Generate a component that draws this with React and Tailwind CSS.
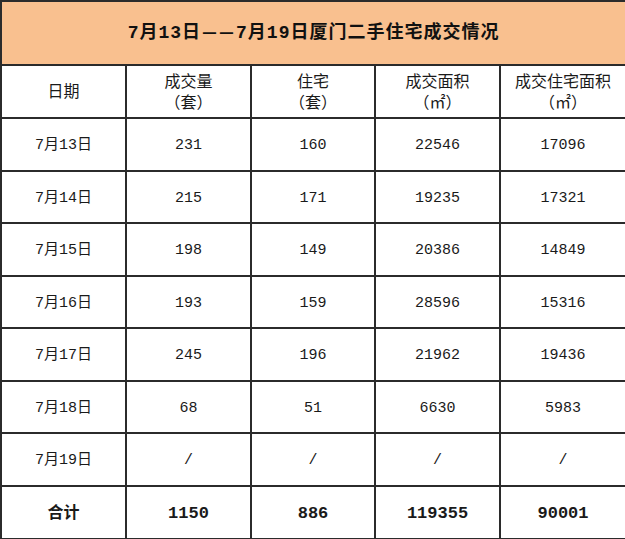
import React from 'react';

const rows = [
  ['7月13日', '231', '160', '22546', '17096'],
  ['7月14日', '215', '171', '19235', '17321'],
  ['7月15日', '198', '149', '20386', '14849'],
  ['7月16日', '193', '159', '28596', '15316'],
  ['7月17日', '245', '196', '21962', '19436'],
  ['7月18日', '68', '51', '6630', '5983'],
  ['7月19日', '/', '/', '/', '/'],
];

const cell = 'border-2 border-[#2b2b2b] text-center align-middle';
const dash = 'inline-block w-[13px] scale-x-[1.2] tracking-normal';

export default function App() {
  return (
    <div className="w-[625px] h-[539px] bg-white text-[#1a1a1a] font-['Liberation_Mono','Noto_Sans_CJK_SC',monospace]">
      <table className="w-[625px] h-[539px] border-collapse table-fixed">
        <colgroup>
          <col className="w-[125px]" />
          <col className="w-[125px]" />
          <col className="w-[124px]" />
          <col className="w-[125px]" />
          <col className="w-[126px]" />
        </colgroup>
        <tbody>
          <tr className="h-[64px]">
            <td colSpan={5} className={`${cell} bg-[#f9c08f] text-[18px] font-bold tracking-[1px] text-[#111]`}>
              7月13日<span className={`${dash} ml-[2px] mr-[4px]`}>—</span><span className={`${dash} mr-[3px]`}>—</span>7月19日厦门二手住宅成交情况
            </td>
          </tr>
          <tr className="h-[53px] text-[16px] leading-[21px]">
            <td className={`${cell} pt-[3px]`}>日期</td>
            <td className={`${cell} pt-[4px]`}>成交量<br />（套）</td>
            <td className={`${cell} pt-[4px]`}>住宅<br />（套）</td>
            <td className={`${cell} pt-[4px]`}>成交面积<br />（㎡）</td>
            <td className={`${cell} pt-[4px]`}>成交住宅面积<br />（㎡）</td>
          </tr>
          {rows.map((r) => (
            <tr key={r[0]} className="h-[52.5px] text-[15px]">
              {r.map((v, i) => (
                <td key={i} className={`${cell} pt-[4px]`}>{v}</td>
              ))}
            </tr>
          ))}
          <tr className="h-[53px] text-[17px] font-bold">
            <td className={`${cell} text-[16px] pt-[3px]`}>合计</td>
            <td className={`${cell} pt-[3px]`}>1150</td>
            <td className={`${cell} pt-[3px]`}>886</td>
            <td className={`${cell} pt-[3px]`}>119355</td>
            <td className={`${cell} pt-[3px]`}>90001</td>
          </tr>
        </tbody>
      </table>
    </div>
  );
}
